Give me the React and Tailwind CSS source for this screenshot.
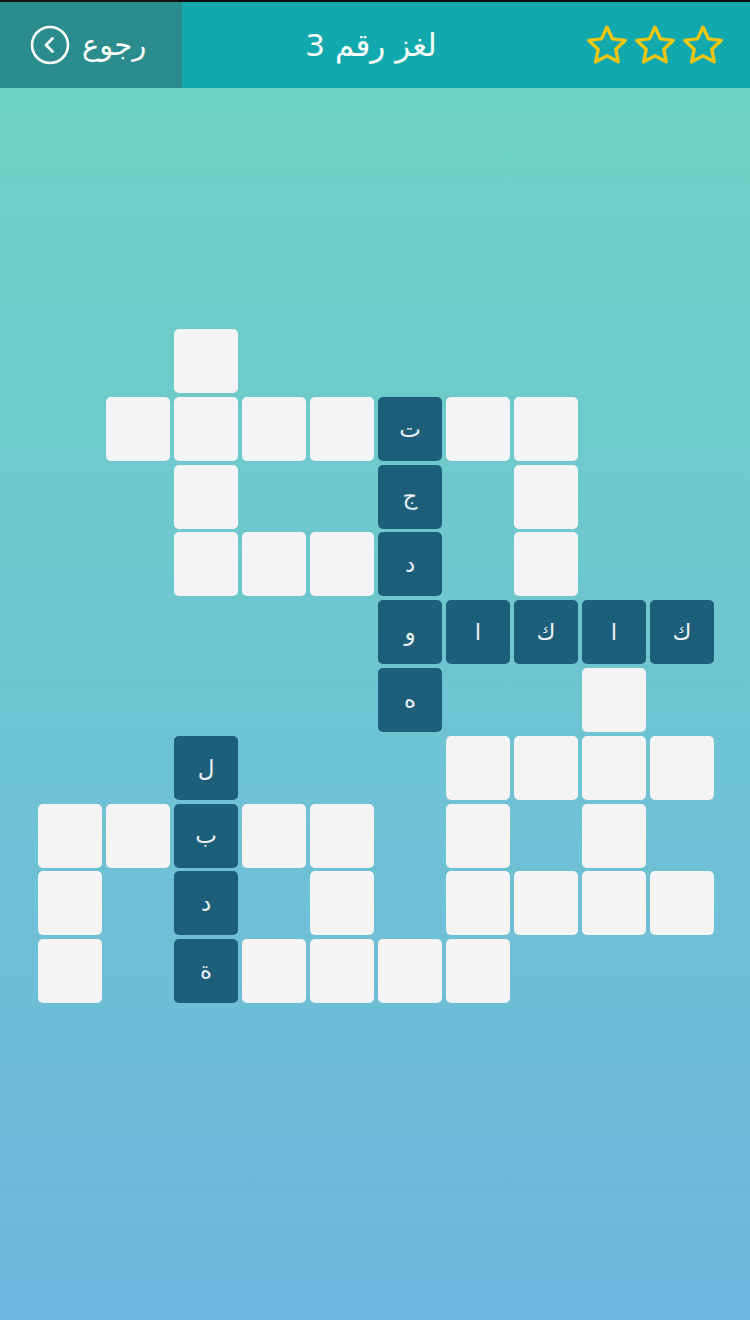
import React from "react";

const grid = [
  "..W.......",
  ".WWWWتWW..",
  "..W..ج.W..",
  "..WWWد.W..",
  ".....واكاك",
  ".....ه..W.",
  "..ل...WWWW",
  "WWبWW.W.W.",
  "W.د.W.WWWW",
  "W.ةWWWW...",
];

function Star() {
  return (
    <svg width="46" height="44" viewBox="0 0 24 23" fill="none">
      <path
        d="M12 2.2l2.9 6.1 6.6.8-4.9 4.6 1.3 6.6L12 17.1l-5.9 3.2 1.3-6.6L2.5 9.1l6.6-.8z"
        stroke="#f1c40f"
        strokeWidth="1.8"
        strokeLinejoin="round"
      />
    </svg>
  );
}

export default function App() {
  const cells = [];
  grid.forEach((row, r) => {
    [...row].forEach((ch, c) => {
      const key = r + "-" + c;
      if (ch === ".") {
        cells.push(<div key={key} />);
      } else if (ch === "W") {
        cells.push(<div key={key} className="rounded-[5px] bg-[#f4f4f4]" />);
      } else {
        cells.push(
          <div
            key={key}
            className="rounded-[5px] bg-[#1d5f7a] flex items-center justify-center text-[#e9f0f3] text-[23px]"
          >
            {ch}
          </div>
        );
      }
    });
  });

  return (
    <div
      className="w-[750px] min-h-[1320px] bg-gradient-to-b from-[#6dd3c0] to-[#6fb7df]"
      style={{ fontFamily: '"DejaVu Sans", "Noto Sans", sans-serif' }}
    >
      {/* Header */}
      <div className="h-[88px] flex items-stretch bg-[#12a9ae] border-t-2 border-[#111]">
        <div className="w-[182px] bg-[#2a8c8c] flex items-center pl-[30px] gap-[12px] text-white">
          <svg width="40" height="40" viewBox="0 0 40 40" fill="none">
            <circle cx="20" cy="20" r="18" stroke="white" strokeWidth="2.6" />
            <path d="M22.5 13.5L16 20l6.5 6.5" stroke="white" strokeWidth="2.8" strokeLinecap="round" strokeLinejoin="round" />
          </svg>
          <span className="text-[29px] leading-none" dir="rtl">رجوع</span>
        </div>
        <div className="flex-1 flex items-center justify-center text-white text-[31px] pr-[24px]" dir="rtl">
          <span className="leading-none">لغز رقم 3</span>
        </div>
        <div className="flex items-center gap-[2px] pr-[24px]">
          <Star />
          <Star />
          <Star />
        </div>
      </div>

      {/* Board */}
      <div className="pt-[241px] pl-[38px]">
        <div className="grid grid-cols-[repeat(10,64px)] auto-rows-[64px] gap-x-[4px] gap-y-[3.8px]">
          {cells}
        </div>
      </div>
    </div>
  );
}
